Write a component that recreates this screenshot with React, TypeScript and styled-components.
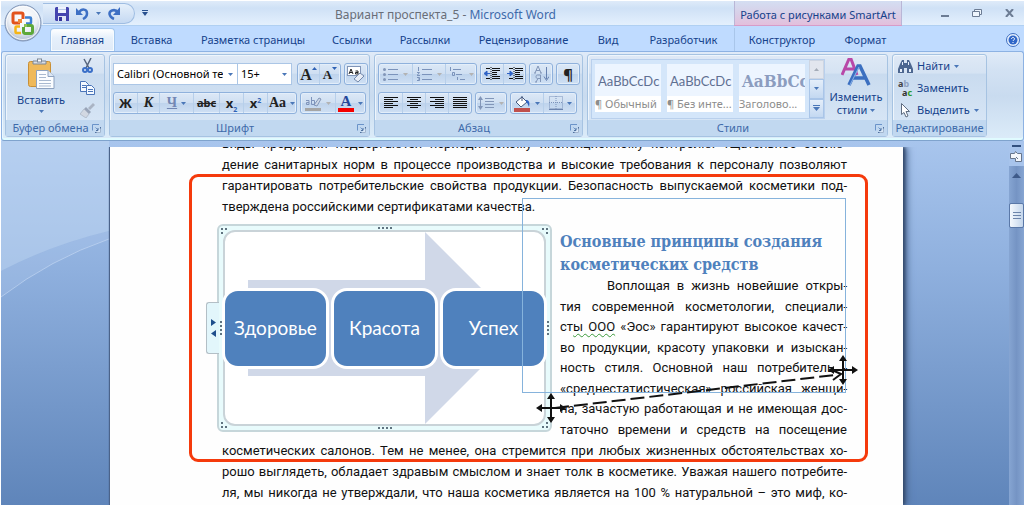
import React from "react";
import styled, { createGlobalStyle, css } from "styled-components";

const ui = `"Noto Sans", "Open Sans", sans-serif`;
const doc = `Lato, "Noto Sans", sans-serif`;
const body = `Roboto, "Noto Sans", sans-serif`;

const GlobalStyle = createGlobalStyle`
  *, *::before, *::after { box-sizing: border-box; }
  html, body { margin: 0; background: #fff; }
  body { font: 11px/14px ${ui}; color: #15428b; overflow: hidden; }
  button, select { font: inherit; color: inherit; margin: 0; padding: 0; border: 0; background: none; }
  svg { display: block; flex: none; }
  p, h1, h2 { margin: 0; }
`;

const Shell = styled.div`
  display: flex;
  flex-direction: column;
  height: 100vh;
  padding: 1px 2px 1px 1px;
`;
const Window = styled.div`
  position: relative;
  flex: 1;
  min-height: 0;
  display: flex;
  flex-direction: column;
  overflow: hidden;
  background: #bfdbff;
`;

/* title bar */
const TitleBar = styled.header`
  display: flex;
  align-items: stretch;
  height: 25px;
  padding-left: 42px;
  background: linear-gradient(#dfebf9, #cfe1f6 30%, #e4f0fd);
  border-bottom: 1px solid #b0d0f2;
`;
const QuickAccess = styled.div`
  display: flex;
  align-items: center;
  gap: 7px;
  width: 92px;
  height: 21px;
  margin-top: 2px;
  padding-left: 12px;
  border: 1px solid #9fbde2;
  border-left: 0;
  border-radius: 0 11px 11px 0;
  background: linear-gradient(#e6f0fb, #c5d9f2);
`;
const PlainButton = styled.button`
  display: flex;
  align-items: center;
  justify-content: center;
`;
const Customize = styled(PlainButton)`
  width: 20px;
`;
const WindowTitle = styled.h1`
  flex: 1;
  padding-left: 2px;
  text-align: center;
  font: 12px/28px ${ui};
  color: #3e6aaa;
  span { color: #696e78; }
`;
const ContextTitle = styled.div`
  width: 168px;
  text-align: center;
  line-height: 27px;
  border: solid #b9b6d6;
  border-width: 0 1px;
  background: linear-gradient(#d4def2, #d8d0e8 50%, #e3bfdc);
  box-shadow: 0 1px 0 #d79cc8;
`;
const WindowButtons = styled.div`
  display: grid;
  grid-template-columns: repeat(3, 32px);
  width: 122px;
  padding-left: 27px;
`;
const OfficeButton = styled.button`
  position: absolute;
  left: 3px;
  top: 3px;
  z-index: 2;
`;

/* tabs */
const TabBar = styled.nav`
  display: flex;
  align-items: stretch;
  height: 25px;
  padding: 2px 4px 0 49px;
`;
const Tab = styled.button<{ $active?: boolean; $w: number }>`
  width: ${(p) => p.$w}px;
  text-align: center;
  white-space: nowrap;
  line-height: 22px;
  ${(p) =>
    p.$active &&
    css`
      border: 1px solid #a5c8ee;
      border-bottom: 0;
      border-radius: 4px 4px 0 0;
      background: linear-gradient(#fff, #e6f0fb 40%, #dfeaf7);
      box-shadow: inset 0 0 0 1px #f6fbff;
    `}
`;
const ContextTabs = styled.div`
  display: flex;
  flex: 1;
  border-left: 1px solid #a9c6ea;
`;
const Help = styled(PlainButton)`
  margin-left: auto;
`;

/* ribbon */
const Ribbon = styled.section`
  display: flex;
  gap: 4px;
  height: 90px;
  padding: 2px 3px 3px;
  border: 1px solid #8db2e3;
  border-bottom: 1px solid #7fa3cd;
  border-radius: 3px;
  background: linear-gradient(#e0ebf8, #d3e2f3 20%, #c9dbef 50%, #dcecf9);
  box-shadow: inset 0 -2px 0 #e0fbff, inset 1px 0 0 #eaf6ff;
`;
const GroupBox = styled.fieldset<{ $w: number }>`
  display: flex;
  flex-direction: column;
  width: ${(p) => p.$w}px;
  min-width: 0;
  margin: 0;
  padding: 0;
  border: 1px solid #a6c3e2;
  border-radius: 3px;
  background: linear-gradient(#dfe9f6, #d5e3f3 22%, #c9dbef 24%, #dae8f7);
  box-shadow: inset 1px 1px 0 #eef5fc;
`;
const GroupBody = styled.div`
  flex: 1;
  min-height: 0;
  display: flex;
`;
const GroupLabel = styled.div`
  display: flex;
  align-items: center;
  justify-content: center;
  height: 16px;
  padding: 0 3px;
  background: #c1d8f0;
  color: #3e6aaa;
  white-space: nowrap;
  span { flex: 1; text-align: center; }
`;

const Stack = styled.div`
  display: flex;
  flex-direction: column;
  gap: 7px;
  padding: 8px 0 0 3px;
`;
const Line = styled.div`
  display: flex;
  gap: 3px;
`;
const ButtonSet = styled.div`
  display: flex;
  height: 22px;
  border: 1px solid #8fb1dc;
  border-radius: 3px;
  background: linear-gradient(#dce8f6, #cfdff2 48%, #bed3ec 50%, #cfe0f4);
  box-shadow: inset 0 0 0 1px #e3eefa;
`;
const Tool = styled.button<{ $w: number }>`
  display: flex;
  align-items: center;
  justify-content: center;
  gap: 4px;
  width: ${(p) => p.$w}px;
  color: #1e1e1e;
  & + & { border-left: 1px solid #b7cfea; }
`;
const SizeTool = styled(Tool)`
  gap: 0;
  align-items: flex-start;
  padding-top: 3px;
`;
const Glyph = styled.span<{ $size?: number; $serif?: boolean; $color?: string }>`
  font: bold ${(p) => p.$size ?? 13}px/16px ${(p) => (p.$serif ? `"Liberation Serif", serif` : ui)};
  color: ${(p) => p.$color ?? "#222"};
  sub, sup { font-size: 7px; line-height: 0; color: #2f62b5; }
  i { font-style: italic; }
  u, s { text-decoration-thickness: 1px; }
`;
const Combo = styled.label<{ $w: number }>`
  position: relative;
  display: flex;
  align-items: center;
  width: ${(p) => p.$w}px;
  height: 22px;
  border: 1px solid #abc6e6;
  background: #fff;
  & + & { border-left: 0; }
  select {
    appearance: none;
    width: 100%;
    padding: 0 14px 0 3px;
    color: #000;
    outline: 0;
  }
  svg { position: absolute; right: 4px; }
`;
const Combos = styled.div`
  display: flex;
  margin-right: 2px;
`;

const BigButton = styled.button<{ $w: number }>`
  display: flex;
  flex-direction: column;
  align-items: center;
  width: ${(p) => p.$w}px;
  padding-top: 3px;
  line-height: 13px;
`;
const BigText = styled.span`
  margin-top: 4px;
  svg { display: inline-block; margin-left: 3px; vertical-align: 2px; }
`;
const BigArrow = styled.span`
  margin-top: 4px;
`;
const IconColumn = styled.div`
  display: flex;
  flex-direction: column;
  gap: 6px;
  padding: 3px 0 0 4px;
`;
const RowButton = styled.button`
  display: flex;
  align-items: center;
  gap: 4px;
  height: 22px;
`;
const RowList = styled.div`
  padding-left: 5px;
`;

const Gallery = styled.div`
  display: flex;
  width: 234px;
  height: 60px;
  margin: 4px 3px 0;
  border: 1px solid #b9d0ed;
  background: #d4e6fa;
`;
const Cells = styled.div`
  flex: 1;
  display: flex;
  gap: 6px;
  padding: 4px 3px 0;
`;
const StyleCell = styled.button`
  width: 66px;
  height: 48px;
  overflow: hidden;
  text-align: left;
  white-space: nowrap;
  background: linear-gradient(#edf5ff 32px, #fff 32px);
  color: #8d8d8d;
`;
const Sample = styled.span<{ $heading?: boolean }>`
  display: block;
  height: 32px;
  padding-left: 3px;
  overflow: hidden;
  font: ${(p) => (p.$heading ? `bold 17px/32px "DejaVu Serif Condensed", "DejaVu Serif", serif` : `13px/32px ${doc}`)};
  color: ${(p) => (p.$heading ? "#8c9dbf" : "#5f6f92")};
`;
const GalleryScroll = styled.div`
  display: grid;
  grid-template-rows: repeat(3, 1fr);
  width: 15px;
  button {
    display: flex;
    align-items: center;
    justify-content: center;
    border: 1px solid #a9c5e8;
    background: linear-gradient(#e4eefa, #c3d8f1);
  }
  button:first-child { background: #e2e6ee; border-color: #cdd5e2; }
`;

/* workspace */
const Workspace = styled.main`
  position: relative;
  flex: 1;
  min-height: 0;
  display: flex;
  overflow: hidden;
  background: linear-gradient(#a8c5ed, #8fb0de 35%, #5f85ba);
`;
const Swoosh = styled.svg`
  position: absolute;
  left: 0;
  top: 0;
`;
const Desk = styled.div`
  position: relative;
  flex: 1;
  display: flex;
  justify-content: center;
  padding: 6px 0 0 2px;
`;
const Page = styled.article`
  position: relative;
  flex: none;
  width: 794px;
  background: #fefefe;
  border-left: 1px solid #4b638a;
  box-shadow: 2px 0 3px #34496b, 4px 0 7px #4a6690;
  clip-path: inset(0 -14px 0 -1px);
`;
const Body = styled.div`
  margin-top: -14px;
  padding: 0 56px 0 112px;
  font: 13px/21px ${body};
  color: #111;
`;
const TextLine = styled.span<{ $indent?: boolean; $last?: boolean }>`
  display: block;
  white-space: nowrap;
  text-align-last: ${(p) => (p.$last ? "left" : "justify")};
  padding-left: ${(p) => (p.$indent ? 47 : 0)}px;
`;
const Wavy = styled.span`
  text-decoration: underline wavy #3b9a3b 1px;
  text-underline-offset: 2px;
`;
const Split = styled.div`
  display: flex;
  gap: 8px;
  height: 223px;
  margin-left: -5px;
`;
const Column = styled.div`
  flex: 1;
  min-width: 0;
  padding-top: 13px;
`;
const Heading = styled.h2`
  font: bold 16px/23px "DejaVu Serif Condensed", "DejaVu Serif", serif;
  color: #4f81bd;
  white-space: nowrap;
`;
const EvenLines = styled.p`
  display: grid;
  grid-template-columns: minmax(0, 1fr);
  grid-auto-rows: 1fr;
  height: 164px;
  line-height: 20px;
`;

const Frame = styled.figure`
  position: relative;
  width: 335px;
  height: 208px;
  margin: 7px 0 0;
  padding: 4px;
  border: 2px solid #c6d6da;
  border-radius: 6px;
  background: #e8fbfc;
`;
const Canvas = styled.div`
  position: relative;
  display: flex;
  align-items: center;
  gap: 8px;
  height: 100%;
  border: 2px solid #c9d3d8;
  border-radius: 12px;
  background: #fff;
`;
const ArrowShape = styled.svg`
  position: absolute;
  left: 0;
  top: 0;
`;
const Step = styled.div`
  position: relative;
  flex: 1;
  height: 75px;
  border-radius: 13px;
  background: #4f81bd;
  box-shadow: 0 0 0 3px #fff;
  color: #fff;
  text-align: center;
  font: 19px/74px ${doc};
`;
const Handles = styled.svg`
  position: absolute;
  left: -2px;
  top: -2px;
`;
const PaneToggle = styled.button`
  position: absolute;
  left: -13px;
  top: 76px;
  display: flex;
  align-items: center;
  justify-content: center;
  width: 13px;
  height: 52px;
  border: 1px solid #b3bfc6;
  border-right: 0;
  border-radius: 3px 0 0 3px;
  background: #e2f6fb;
`;
const Highlight = styled.div`
  position: absolute;
  left: 79px;
  top: 27px;
  width: 679px;
  height: 288px;
  border: 3px solid #f53a0c;
  border-radius: 9px;
`;
const Ghost = styled.div`
  position: absolute;
  left: 412px;
  top: 51px;
  width: 324px;
  height: 195px;
  border: 1px solid #86b3dc;
`;
const Drag = styled.svg`
  position: absolute;
  left: 0;
  top: 0;
`;

const Scroll = styled.aside`
  position: relative;
  display: flex;
  flex-direction: column;
  align-items: center;
  width: 15px;
  background: linear-gradient(90deg, #86a5d2, #7594c4 50%, #86a5d2);
`;
const ScrollTop = styled.div`
  display: flex;
  flex-direction: column;
  align-items: center;
  gap: 4px;
  width: 100%;
  height: 25px;
  padding-top: 4px;
  background: #a8c4ec;
`;
const ScrollUp = styled(PlainButton)`
  height: 18px;
`;
const Thumb = styled.button`
  display: flex;
  align-items: center;
  justify-content: center;
  width: 15px;
  height: 25px;
  margin-top: 19px;
  border: 1px solid #5a78a8;
  border-radius: 2px;
  background: linear-gradient(90deg, #f4f8fd, #c4d6ec);
`;

const Caret = ({ c = "#4a77b8" }: { c?: string }) => (
  <svg width="5" height="3"><path d="M0 0h5L2.500 3z" fill={c} /></svg>
);

const Launcher = () => (
  <PlainButton type="button" aria-label="Параметры">
    <svg width="9" height="9" fill="none" stroke="#6a93c9">
      <path d="M.5 6.500V.5H7" />
      <path d="M3.500 3.500 6 6" />
      <path d="M8.500 3v5.500H3M6 4v2.500H4" stroke="#51729f" />
      <path d="M9 9V4L4 9z" fill="#f4f9ff" opacity=".5" stroke="none" />
    </svg>
  </PlainButton>
);

function Group({ w, label, launcher = true, children }: { w: number; label: string; launcher?: boolean; children: React.ReactNode }) {
  return (
    <GroupBox $w={w} aria-label={label}>
      <GroupBody>{children}</GroupBody>
      <GroupLabel><span>{label}</span>{launcher && <Launcher />}</GroupLabel>
    </GroupBox>
  );
}

const Lines = ({ rows, c = "#111" }: { rows: [number, number][]; c?: string }) => (
  <svg width="14" height="12" stroke={c}>
    {rows.map(([a, b], i) => <path key={i} d={`M${a} ${i * 2 + 0.5}H${b}`} />)}
  </svg>
);

const BulletIcon = ({ kind }: { kind: "dot" | "num" | "multi" }) => (
  <svg width="16" height="14" stroke="#7b93bb" fill="#8296b8">
    {kind === "dot" && <><path d="M5 2.500h10M5 7.500h10M5 12.500h10" /><g stroke="none"><circle cx="1.500" cy="2.500" r="1.500" /><circle cx="1.500" cy="7.500" r="1.500" /><circle cx="1.500" cy="12.500" r="1.500" /></g></>}
    {kind === "num" && <><path d="M5 2.500h10M5 7.500h10M5 12.500h10" /><path d="M1.500 0v4M0 5.500h2.500L0 8.500h3M0 10.500h2.500v3H0M1 12h1" fill="none" /></>}
    {kind === "multi" && <><path d="M4 2.500h8M7 7.500h6M11 12.500h5" /><path d="M1.500 0v4M3.500 5.500h2v3h-2zM8.500 10v3" fill="none" /></>}
  </svg>
);

const IndentIcon = ({ right }: { right?: boolean }) => (
  <svg width="16" height="14" stroke="#111">
    <path d="M2 1.500h4M8 1.500h8M8 3.500h8M8 5.500h5M8 7.500h5M8 9.500h8M2 11.500h4M8 11.500h8" />
    <path d="M7 0v14" strokeDasharray="1 1" />
    {right ? <path d="M0 6.500h4M3 4l3 2.500L3 9z" stroke="#2f62c5" fill="#2f62c5" /> : <path d="M6 6.500H2M3 4 0 6.500 3 9z" stroke="#2f62c5" fill="#2f62c5" />}
  </svg>
);

const OfficeLogo = () => (
  <svg width="38" height="38" viewBox="0 0 38 38">
    <defs>
      <radialGradient id="orb" cx="50%" cy="35%" r="65%">
        <stop offset="0" stopColor="#fff" /><stop offset=".6" stopColor="#eef1f6" /><stop offset="1" stopColor="#a9b8d0" />
      </radialGradient>
    </defs>
    <circle cx="19" cy="19" r="18" fill="url(#orb)" stroke="#7e93b5" />
    <circle cx="19" cy="19" r="16.500" fill="none" stroke="#fff" opacity=".8" />
    <g fill="none" strokeWidth="3">
      <path d="M16 19H10.500a1.500 1.500 0 0 1-1.500-1.500V10.500A1.500 1.500 0 0 1 10.500 9h7a1.500 1.500 0 0 1 1.500 1.500V15" stroke="#e2531c" />
      <path d="M21 13.500h5a1 1 0 0 1 1 1v4a1 1 0 0 1-1 1h-4" stroke="#3c7fd0" strokeWidth="2.500" />
      <path d="M17 29h-4.500a1 1 0 0 1-1-1v-4.500a1 1 0 0 1 1-1H16" stroke="#f5b516" strokeWidth="2.500" />
      <path d="M19.500 23v5a1.500 1.500 0 0 0 1.500 1.500h6a1.500 1.500 0 0 0 1.500-1.500v-5a1.500 1.500 0 0 0-1.500-1.500h-6" stroke="#5ea83a" />
    </g>
    <path d="M14 15h4v4h-4z" fill="#f08a3a" /><path d="M20 20h3v3h-3z" fill="#8cc152" />
  </svg>
);

const Save = () => (
  <svg width="14" height="14"><path d="M1 0h12l1 1v13H1L0 13V1z" fill="#4444ae" /><path d="M3 0h8v6H3z" fill="#eef3fd" /><path d="M3 2h8v1H3z" fill="#b9c8e8" /><path d="M3 9h8v5H3z" fill="#dfe5f5" /><path d="M4 10h3v4H4z" fill="#34349a" /></svg>
);
const Undo = () => (
  <svg width="13" height="13" fill="none" stroke="#3d6fc4" strokeWidth="2.500"><path d="M3 5.500C6 1 11 2 11 6.500c0 3-2 4.500-4 5.500" /><path d="M0 1v7h7z" fill="#3d6fc4" stroke="none" /></svg>
);
const Redo = () => (
  <svg width="13" height="13" fill="none" stroke="#3d6fc4" strokeWidth="2.500"><path d="M6 12C1 10 0 5 4 3.500c3-1 5 .5 6 2" /><path d="M12 0v8H5z" fill="#3d6fc4" stroke="none" /></svg>
);

const PasteIcon = () => (
  <svg width="27" height="31">
    <rect x=".5" y="3.500" width="22" height="25" rx="2" fill="#efb95a" stroke="#c98f35" />
    <path d="M5 6V3h4a3 3 0 0 1 5 0h4v3z" fill="#d9dde4" stroke="#7d8796" />
    <rect x="9.500" y="1" width="4" height="3" fill="#fff" stroke="#7d8796" />
    <path d="M8.500 12.500H20l6 6v12H8.500z" fill="#fbfdff" stroke="#8da2c0" />
    <path d="M20 12.500v6h6" fill="#dce7f5" stroke="#8da2c0" />
    <path d="M11 16.500h7M11 19.500h7M11 22.500h12M11 25.500h12M11 28h12" stroke="#a9b9d0" />
  </svg>
);
const CutIcon = () => (
  <svg width="12" height="16" fill="none"><path d="M2 1l5 9M9 0 4 10" stroke="#56657e" strokeWidth="1.500" /><circle cx="3" cy="12" r="2" stroke="#3a6fc8" strokeWidth="2" /><circle cx="8" cy="12" r="2" stroke="#3a6fc8" strokeWidth="2" /></svg>
);
const CopyIcon = () => (
  <svg width="15" height="16" fill="#f4f9ff" stroke="#4a74b8"><path d="M.5 1.500h5l3 3v7h-8z" /><path d="M2 5.500h4M2 7.500h4" /><path d="M6.500 5.500h5l3 3v6h-8z" /><path d="M8 9.500h5M8 11.500h5" /></svg>
);
const BrushIcon = () => (
  <svg width="15" height="16"><path d="M13 1l2 2-5 5-2-2z" fill="#aab4c4" /><path d="M6 5l5 5-2 2-5-5z" fill="#98a4b8" /><path d="M4 7l5 5-3 4-6-4z" fill="#d2d8e2" stroke="#a8b2c2" strokeWidth=".7" /></svg>
);

const FindIcon = () => (
  <svg width="15" height="13" fill="#4d6790"><path d="M2 4 4 0h2v3h3V0h2l2 4 2 5v4H9V8H6v5H0V9z" /><path d="M2 9h2v3H2zM11 9h2v3h-2zM4 2h1v3H4zM10 2h1v3h-1z" fill="#e8f0fb" /></svg>
);
const ReplaceText = styled.span`
  width: 15px;
  font: bold 9px/9px ${ui};
  color: #444;
  text-align: left;
  span { display: block; }
  span + span { padding-left: 4px; color: #333; }
  em { font-style: normal; color: #2c9a2c; }
  i { font-style: normal; color: #8ea1bf; }
`;
const CursorIcon = () => (
  <svg width="15" height="15"><path d="M3.500.5v11l2.500-2 2 4.500 2-1-2-4.500h3.500z" fill="#fff" stroke="#5f6c80" /></svg>
);
const StylesIcon = () => (
  <svg width="30" height="28" fill="none">
    <path d="M1 17 8 1h2l6 16M4 11h9" stroke="#b848a8" strokeWidth="3" />
    <path d="M8 27 17 8h2l9 19M12 20h12" stroke="#3b6fc0" strokeWidth="3.500" />
    <path d="M9 27 18 9" stroke="#8fb6ea" />
  </svg>
);
const UpDown = () => (
  <svg width="17" height="14" fill="none" stroke="#8296b8"><path d="M7 2.500h9M7 5.500h9M7 8.500h9M7 11.500h9M2.500 2v10" /><path d="M0 4l2.500-4L5 4zM0 10l2.500 4L5 10z" fill="#8296b8" stroke="none" /></svg>
);
const BucketIcon = () => (
  <svg width="17" height="17"><path d="M2 7l6-5 5 5-6 5z" fill="#fff" stroke="#44597f" /><path d="M8 6V1" stroke="#44597f" /><path d="M12 5c3 0 4 2 3 7-1-2-1-4-3-5z" fill="#2f62c5" /><path d="M0 13h16v4H0z" fill="#c0504d" /></svg>
);
const BorderIcon = () => (
  <svg width="14" height="14" stroke="#7b93bb" fill="none"><path d="M.5.500h13v12H.5zM7 0v13M0 6.500h14" strokeDasharray="1 1" /><path d="M0 13.500h14" stroke="#6b84ae" /></svg>
);
const SortIcon = () => (
  <svg width="15" height="18" fill="none" stroke="#8296b8"><path d="M1 8l3-7 3 7M2 5.500h4M0 8h2M6 8h2" /><path d="M6.500 17v-7h-3c-2 0-2 3.500 0 3.500h3M4 13.500 2 17M1 17h2" /><path d="M12.500 2v12M10 11.500l2.500 4 2.500-4" stroke="#6681b0" /></svg>
);
const HighlightIcon = () => (
  <svg width="17" height="17"><path d="M9 10l5-7 2 1-4 7z" fill="#cdd7e6" stroke="#8296b8" /><path d="M0 13h16v3H0z" fill="#a5a5a5" /><path d="M1 5.500h3v4H1.500v-2H4M6.500 2v7.500h3v-4h-3" fill="none" stroke="#7e93ba" /></svg>
);
const FontColor = styled.span`
  width: 16px;
  height: 17px;
  border-bottom: 4px solid #f40000;
  font: bold 15px/13px "Liberation Serif", serif;
  color: #24479a;
  text-align: center;
`;
const EraserIcon = () => (
  <svg width="18" height="17"><rect x=".5" y=".5" width="13" height="9" fill="#fff" stroke="#8296b8" /><path d="M2 8l2-5 2 5M3 6.500h2M8.500 5h2.500v3H8.500v-1.500H11" fill="none" stroke="#222" /><path d="M7 13l6-6 4 3-6 6z" fill="#e8edf6" stroke="#7489ab" /></svg>
);

const MoveCursor = ({ x, y }: { x: number; y: number }) => (
  <g transform={`translate(${x} ${y})`}>
    <path d="M-11 0H11M0-11V11" stroke="#111" strokeWidth="2" />
    <path d="M-15 0l6-4v8zM15 0l-6-4v8zM0-15l-4 6h8zM0 15l-4-6h8z" fill="#111" />
  </g>
);

const tabs: [string, number][] = [
  ["Вставка", 73], ["Разметка страницы", 130], ["Ссылки", 68], ["Рассылки", 78], ["Рецензирование", 119], ["Вид", 50], ["Разработчик", 101],
];

const topLines = [
  "виды продукции подвергаются периодическому инспекционному контролю. Тщательное соблю-",
  "дение санитарных норм в процессе производства и высокие требования к персоналу позволяют",
  "гарантировать потребительские свойства продукции. Безопасность выпускаемой косметики под-",
];
const bottomLines = [
  "косметических салонов. Тем не менее, она стремится при любых жизненных обстоятельствах хо-",
  "рошо выглядеть, обладает здравым смыслом и знает толк в косметике. Уважая нашего потребите-",
  "ля, мы никогда не утверждали, что наша косметика является на 100 % натуральной – это миф, ко-",
];

export default function App() {
  return (
    <Shell>
      <GlobalStyle />
      <Window>
        <OfficeButton type="button" aria-label="Office"><OfficeLogo /></OfficeButton>
        <TitleBar>
          <QuickAccess>
            <PlainButton type="button" aria-label="Сохранить"><Save /></PlainButton>
            <PlainButton type="button" aria-label="Отменить"><Undo /></PlainButton>
            <Caret />
            <PlainButton type="button" aria-label="Вернуть"><Redo /></PlainButton>
          </QuickAccess>
          <Customize type="button" aria-label="Настройка">
            <svg width="6" height="6"><path d="M0 .5h6" stroke="#28508f" /><path d="M0 2h6L3 6z" fill="#28508f" /></svg>
          </Customize>
          <WindowTitle><span>Вариант проспекта_5 - </span>Microsoft Word</WindowTitle>
          <ContextTitle>Работа с рисунками SmartArt</ContextTitle>
          <WindowButtons>
            <PlainButton type="button" aria-label="Свернуть"><svg width="8" height="8"><path d="M0 6h8v2H0z" fill="#6c7c94" /></svg></PlainButton>
            <PlainButton type="button" aria-label="Восстановить"><svg width="10" height="8" fill="#eef5fd" stroke="#6c7c94"><path d="M2.500 2V.5h7v5H8" /><path d="M.5 2.500h7v5h-7z" /></svg></PlainButton>
            <PlainButton type="button" aria-label="Закрыть"><svg width="9" height="8"><path d="M1 0l7 8M8 0 1 8" stroke="#6c7c94" strokeWidth="2" /></svg></PlainButton>
          </WindowButtons>
        </TitleBar>
        <TabBar>
          <Tab type="button" $active $w={65}>Главная</Tab>
          {tabs.map(([t, w]) => <Tab type="button" key={t} $w={w}>{t}</Tab>)}
          <ContextTabs>
            <Tab type="button" $w={94}>Конструктор</Tab>
            <Tab type="button" $w={73}>Формат</Tab>
            <Help type="button" aria-label="Справка">
              <svg width="14" height="14"><circle cx="7" cy="7" r="6.500" fill="#e6f0fd" stroke="#3f6fc0" /><circle cx="7" cy="7" r="4.500" fill="#2f66c8" /><path d="M5.500 6c0-2 3-2 3 0 0 1-1.500 1-1.500 2M7 9v1" stroke="#fff" fill="none" /></svg>
            </Help>
          </ContextTabs>
        </TabBar>
        <Ribbon>
          <Group w={100} label="Буфер обмена">
            <BigButton type="button" $w={70}>
              <PasteIcon /><BigText>Вставить</BigText><BigArrow><Caret /></BigArrow>
            </BigButton>
            <IconColumn>
              <PlainButton type="button" aria-label="Вырезать"><CutIcon /></PlainButton>
              <PlainButton type="button" aria-label="Копировать"><CopyIcon /></PlainButton>
              <PlainButton type="button" aria-label="Формат по образцу"><BrushIcon /></PlainButton>
            </IconColumn>
          </Group>
          <Group w={261} label="Шрифт">
            <Stack>
              <Line>
                <Combos>
                  <Combo $w={125}><select aria-label="Шрифт"><option>Calibri (Основной текст)</option></select><Caret /></Combo>
                  <Combo $w={54}><select aria-label="Размер"><option>15+</option></select><Caret /></Combo>
                </Combos>
                <ButtonSet>
                  <SizeTool type="button" $w={21}><Glyph $serif $size={16}>A</Glyph><svg width="5" height="3"><path d="M0 3h5L2.500 0z" fill="#2f62b5" /></svg></SizeTool>
                  <SizeTool type="button" $w={21}><Glyph $serif $size={13}>A</Glyph><Caret c="#2f62b5" /></SizeTool>
                </ButtonSet>
                <ButtonSet><Tool type="button" $w={22} aria-label="Очистить формат"><EraserIcon /></Tool></ButtonSet>
              </Line>
              <Line>
                <ButtonSet>
                  <Tool type="button" $w={23}><Glyph>Ж</Glyph></Tool>
                  <Tool type="button" $w={22}><Glyph $serif $size={14}><i>К</i></Glyph></Tool>
                  <Tool type="button" $w={34}><Glyph $serif $size={14} $color="#7287b4"><u>Ч</u></Glyph><Caret /></Tool>
                  <Tool type="button" $w={26}><Glyph $size={11}><s>abc</s></Glyph></Tool>
                  <Tool type="button" $w={24}><Glyph>x<sub>2</sub></Glyph></Tool>
                  <Tool type="button" $w={24}><Glyph>x<sup>2</sup></Glyph></Tool>
                  <Tool type="button" $w={29}><Glyph $serif $size={14}>Aa</Glyph><Caret /></Tool>
                </ButtonSet>
                <ButtonSet>
                  <Tool type="button" $w={34} aria-label="Цвет выделения"><HighlightIcon /><Caret c="#b3b3b3" /></Tool>
                  <Tool type="button" $w={30}><FontColor>A</FontColor><Caret /></Tool>
                </ButtonSet>
              </Line>
            </Stack>
          </Group>
          <Group w={209} label="Абзац">
            <Stack>
              <Line>
                <ButtonSet>
                  <Tool type="button" $w={33} aria-label="Маркеры"><BulletIcon kind="dot" /><Caret c="#b3b3b3" /></Tool>
                  <Tool type="button" $w={33} aria-label="Нумерация"><BulletIcon kind="num" /><Caret c="#b3b3b3" /></Tool>
                  <Tool type="button" $w={31} aria-label="Многоуровневый список"><BulletIcon kind="multi" /><Caret c="#b3b3b3" /></Tool>
                </ButtonSet>
                <ButtonSet>
                  <Tool type="button" $w={22} aria-label="Уменьшить отступ"><IndentIcon /></Tool>
                  <Tool type="button" $w={22} aria-label="Увеличить отступ"><IndentIcon right /></Tool>
                </ButtonSet>
                <ButtonSet><Tool type="button" $w={22} aria-label="Сортировка"><SortIcon /></Tool></ButtonSet>
                <ButtonSet><Tool type="button" $w={22}><Glyph $size={15}>¶</Glyph></Tool></ButtonSet>
              </Line>
              <Line>
                <ButtonSet>
                  <Tool type="button" $w={23} aria-label="По левому краю"><Lines rows={[[0, 14], [0, 9], [0, 14], [0, 9], [0, 14], [0, 9]]} /></Tool>
                  <Tool type="button" $w={23} aria-label="По центру"><Lines rows={[[0, 14], [3, 11], [0, 14], [3, 11], [0, 14], [3, 11]]} /></Tool>
                  <Tool type="button" $w={23} aria-label="По правому краю"><Lines rows={[[0, 14], [5, 14], [0, 14], [5, 14], [0, 14], [5, 14]]} /></Tool>
                  <Tool type="button" $w={23} aria-label="По ширине"><Lines rows={[[0, 14], [0, 14], [0, 14], [0, 14], [0, 14], [0, 14]]} /></Tool>
                </ButtonSet>
                <ButtonSet><Tool type="button" $w={30} aria-label="Интервал"><UpDown /><Caret c="#b3b3b3" /></Tool></ButtonSet>
                <ButtonSet>
                  <Tool type="button" $w={32} aria-label="Заливка"><BucketIcon /><Caret /></Tool>
                  <Tool type="button" $w={33} aria-label="Границы"><BorderIcon /><Caret /></Tool>
                </ButtonSet>
              </Line>
            </Stack>
          </Group>
          <Group w={301} label="Стили">
            <Gallery>
              <Cells>
                <StyleCell type="button"><Sample>AaBbCcDc</Sample><span>¶ Обычный</span></StyleCell>
                <StyleCell type="button"><Sample>AaBbCcDc</Sample><span>¶ Без инте...</span></StyleCell>
                <StyleCell type="button"><Sample $heading>AaBbCc</Sample><span>Заголово...</span></StyleCell>
              </Cells>
              <GalleryScroll>
                <button type="button" aria-label="Вверх"><svg width="5" height="3"><path d="M0 3h5L2.500 0z" fill="#a5acb8" /></svg></button>
                <button type="button" aria-label="Вниз"><Caret /></button>
                <button type="button" aria-label="Ещё"><svg width="7" height="6"><path d="M0 .5h7" stroke="#4a77b8" /><path d="M0 2h7L3.500 6z" fill="#4a77b8" /></svg></button>
              </GalleryScroll>
            </Gallery>
            <BigButton type="button" $w={56}>
              <StylesIcon /><BigText>Изменить<br />стили<Caret /></BigText>
            </BigButton>
          </Group>
          <Group w={95} label="Редактирование" launcher={false}>
            <RowList>
              <RowButton type="button"><FindIcon />Найти<Caret /></RowButton>
              <RowButton type="button"><ReplaceText aria-hidden="true"><span>a<i>b</i></span><span>a<em>c</em></span></ReplaceText>Заменить</RowButton>
              <RowButton type="button"><CursorIcon />Выделить<Caret /></RowButton>
            </RowList>
          </Group>
        </Ribbon>
        <Workspace>
          <Swoosh width="108" height="366" viewBox="0 0 108 366">
            <path d="M0 0H108V90Q50 104 0 130z" fill="#c3d9f3" opacity=".5" />
            <path d="M0 130Q50 104 108 90V98Q50 118 0 156z" fill="#c3d9f3" opacity=".2" />
            <path d="M0 156Q50 118 108 98" fill="none" stroke="#c9dcf5" opacity=".6" />
          </Swoosh>
          <Desk>
            <Page>
              <Body>
                <p>
                  {topLines.map((t) => <TextLine key={t}>{t}</TextLine>)}
                  <TextLine $last>тверждена российскими сертификатами качества.</TextLine>
                </p>
                <Split>
                  <Frame>
                    <Canvas>
                      <ArrowShape width="319" height="196" viewBox="0 0 319 196">
                        <path d="M23 48H200V0l96 96-96 96V144H23z" fill="#d0d8e8" />
                      </ArrowShape>
                      <Step>Здоровье</Step>
                      <Step>Красота</Step>
                      <Step>Успех</Step>
                    </Canvas>
                    <Handles width="335" height="208" fill="none" stroke="#5f7380" strokeWidth="2">
                      <path d="M161 4h14M161 204h14" strokeDasharray="2 2" />
                      <path d="M4 97v14M331 97v14" strokeDasharray="2 2" />
                      <path d="M4 5h6M4 9h2M325 5h6M329 9h2M4 203h6M4 199h2M325 203h6M329 199h2" strokeDasharray="2 2" />
                    </Handles>
                    <PaneToggle type="button" aria-label="Область текста">
                      <svg width="5" height="18" fill="#1f4e8c"><path d="M0 0l5 3.500L0 7zM5 11 0 14.500 5 18z" /></svg>
                    </PaneToggle>
                  </Frame>
                  <Column>
                    <Heading>Основные принципы создания<br />косметических средств</Heading>
                    <EvenLines>
                      <TextLine $indent>Воплощая в жизнь новейшие откры-</TextLine>
                      <TextLine>тия современной косметологии, специали-</TextLine>
                      <TextLine>ст<Wavy>ы ООО</Wavy> «Эос» гарантируют высокое качест-</TextLine>
                      <TextLine>во продукции, красоту упаковки и изыскан-</TextLine>
                      <TextLine>ность стиля. Основной наш потребитель -</TextLine>
                      <TextLine>«среднестатистическая» российская женщи-</TextLine>
                      <TextLine>на, зачастую работающая и не имеющая дос-</TextLine>
                      <TextLine>таточно времени и средств на посещение</TextLine>
                    </EvenLines>
                  </Column>
                </Split>
                <p>{bottomLines.map((t) => <TextLine key={t}>{t}</TextLine>)}</p>
              </Body>
              <Highlight />
              <Ghost />
              <Drag width="794" height="358" viewBox="0 0 794 358">
                <path d="M445 261 725 228" stroke="#111" strokeWidth="2" strokeDasharray="14 5" />
                <path d="M722 223l9 4-8 6" stroke="#111" strokeWidth="2" fill="none" />
                <MoveCursor x={441} y={261} />
                <MoveCursor x={733} y={223} />
              </Drag>
            </Page>
          </Desk>
          <Scroll>
            <ScrollTop>
              <svg width="9" height="2"><path d="M0 0h9v2H0z" fill="#33507f" /></svg>
              <svg width="13" height="12" fill="#f3f6fb" stroke="#66758c"><path d="M.5 2.500h4l1-2 2 2h4v8h-6v-3h-5z" /><path d="M6 6l2 2" /></svg>
            </ScrollTop>
            <ScrollUp type="button" aria-label="Вверх"><svg width="9" height="5"><path d="M0 5h9L4.500 0z" fill="#3e5a89" /></svg></ScrollUp>
            <Thumb type="button" aria-label="Прокрутка"><svg width="8" height="8" stroke="#6c84aa"><path d="M0 .5h8M0 3.500h8M0 6.500h8" /></svg></Thumb>
          </Scroll>
        </Workspace>
      </Window>
    </Shell>
  );
}
